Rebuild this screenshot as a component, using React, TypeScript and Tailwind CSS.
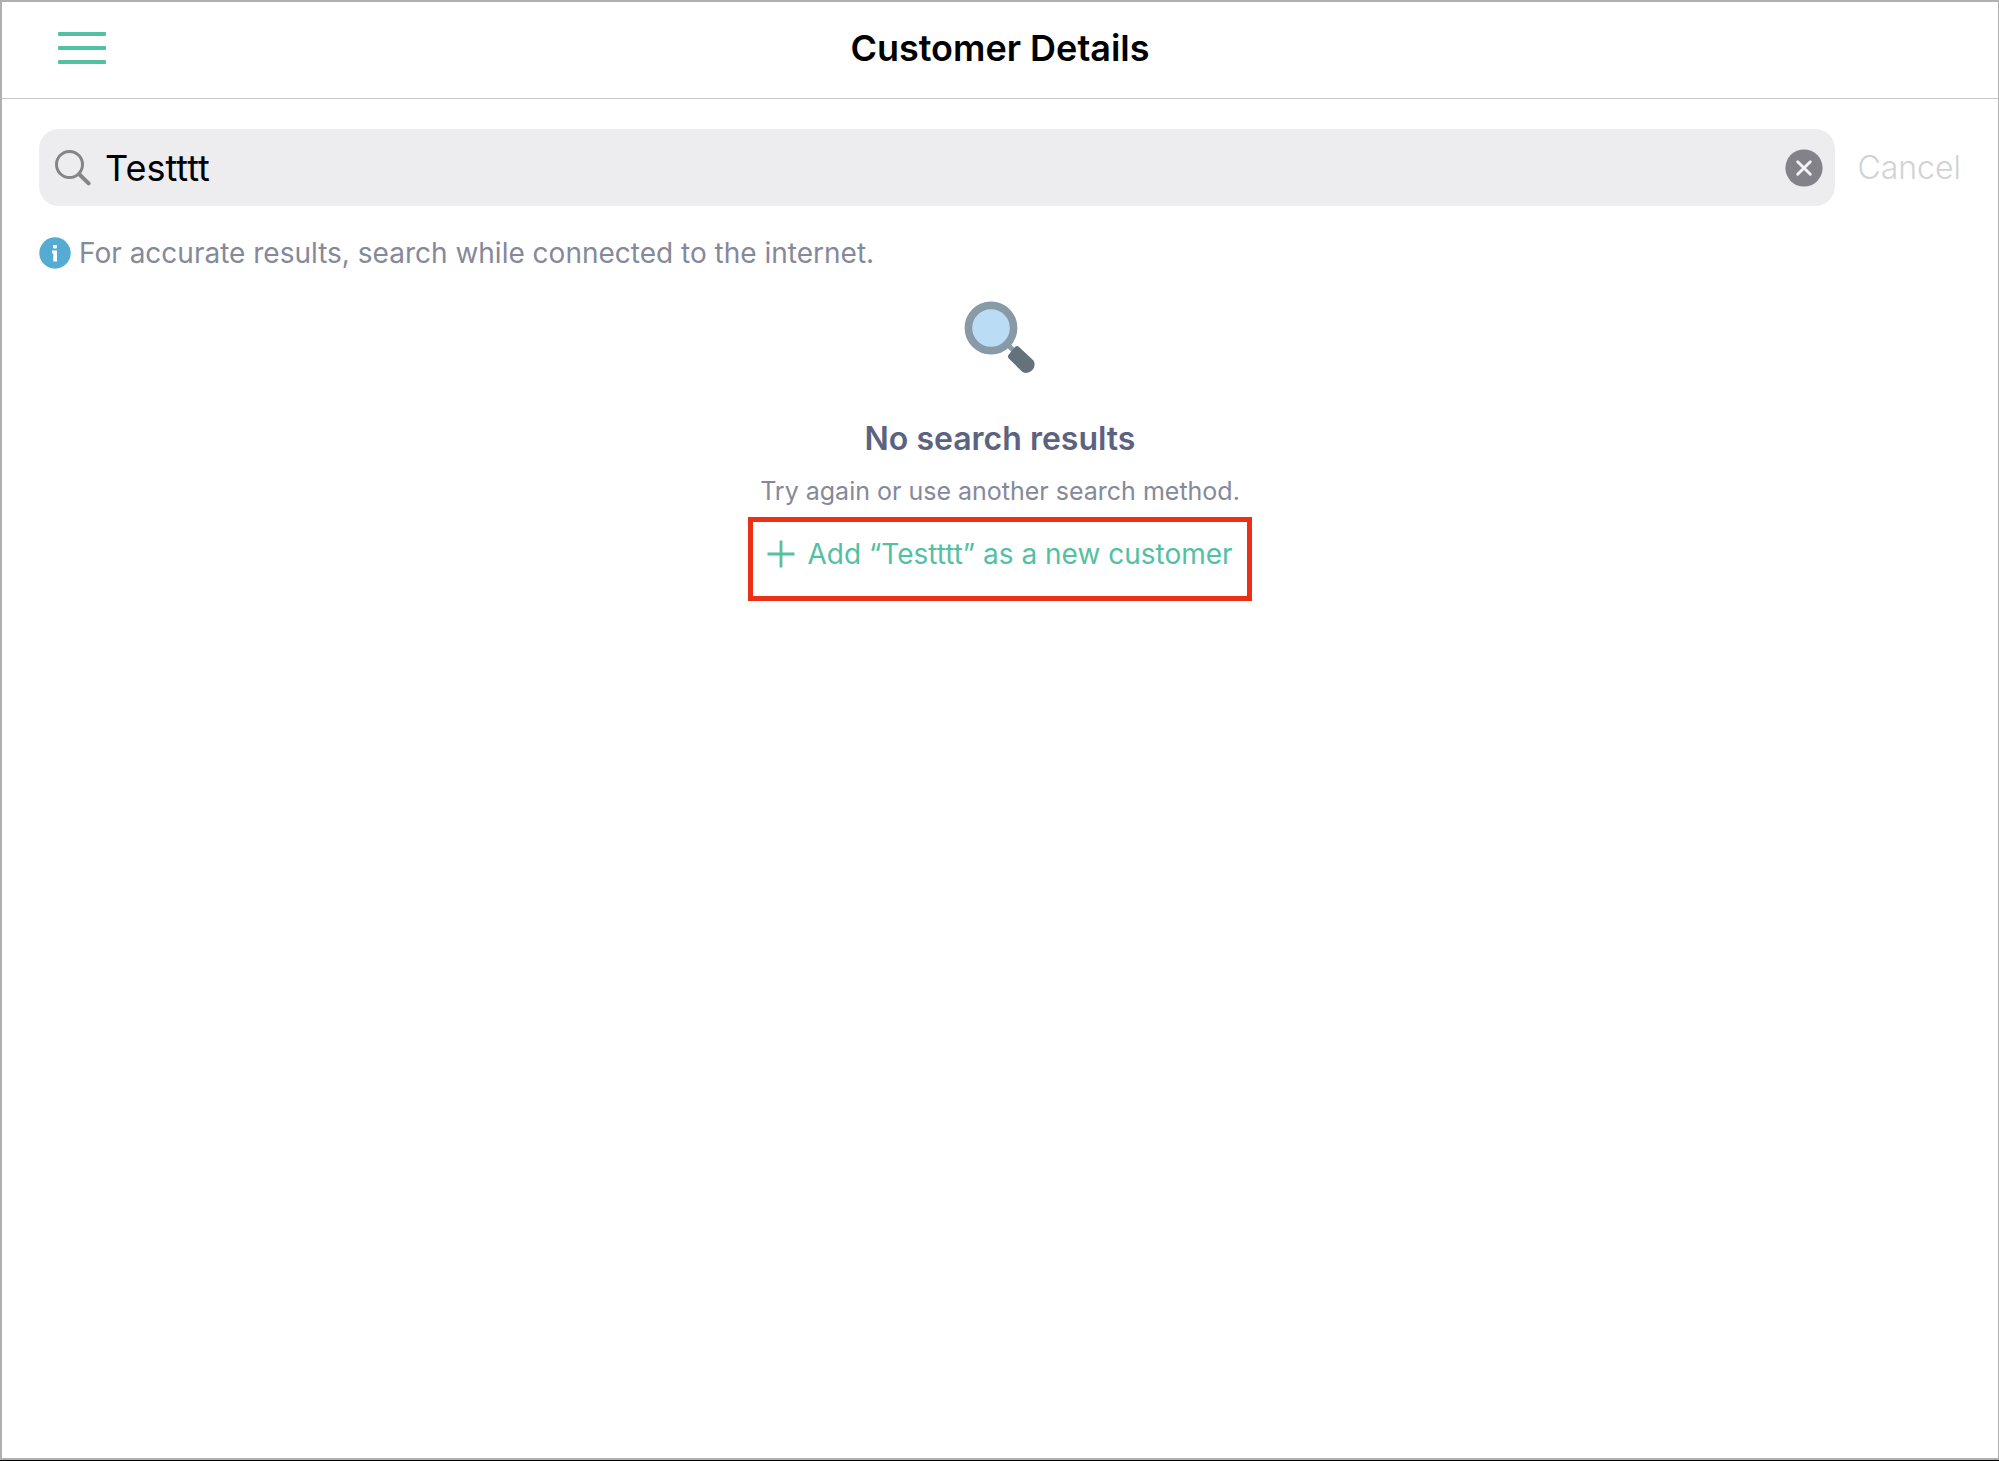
import React, { useState } from "react";

const MenuIcon = () => (
  <svg width="48" height="32" viewBox="0 0 48 32" fill="#54c0a2" aria-hidden="true">
    <rect x="0" y="0" width="48" height="4" rx="1" />
    <rect x="0" y="14" width="48" height="4" rx="1" />
    <rect x="0" y="28" width="48" height="4" rx="1" />
  </svg>
);

const SearchIcon = () => (
  <svg
    width="36"
    height="36"
    viewBox="0 0 36 36"
    fill="none"
    stroke="#858588"
    aria-hidden="true"
    className="shrink-0"
  >
    <circle cx="14.5" cy="14.5" r="13" strokeWidth="3" />
    <path d="M24.2 24.2L33.6 33.4" strokeWidth="4" strokeLinecap="round" />
  </svg>
);

const ClearIcon = () => (
  <svg width="38" height="38" viewBox="0 0 38 38" aria-hidden="true">
    <circle cx="19" cy="19" r="18.6" fill="#838288" />
    <path
      d="M12.7 12.7L25.3 25.3M25.3 12.7L12.7 25.3"
      stroke="#f3f3f5"
      strokeWidth="2.9"
      strokeLinecap="round"
    />
  </svg>
);

const InfoIcon = () => (
  <svg width="32" height="32" viewBox="0 0 32 32" aria-hidden="true" className="shrink-0">
    <circle cx="16" cy="16" r="15.7" fill="#55acd2" />
    <rect x="14" y="8" width="4" height="3.4" rx="0.8" fill="#fff" />
    <path d="M13 13.6h5v11h-3.7v-8.4H13z" fill="#fff" />
  </svg>
);

const MagnifierIcon = () => (
  <svg width="72" height="72" viewBox="0 0 72 72" aria-hidden="true">
    <path d="M42 42L52 52" stroke="#8a9ba8" strokeWidth="5" />
    <circle cx="27" cy="27" r="22.6" fill="#bbdcf5" stroke="#889aa6" strokeWidth="7.6" />
    <path
      d="M54.5 45.5L69.5 59.5A8.4 8.4 0 0 1 58.5 71L44.8 57.6Q43 55.5 44.8 53.4L51 46Q52.8 44.2 54.5 45.5Z"
      fill="#64727c"
    />
  </svg>
);

const PlusIcon = () => (
  <svg
    width="28"
    height="28"
    viewBox="0 0 28 28"
    fill="none"
    stroke="#54c0a2"
    strokeWidth="2.8"
    aria-hidden="true"
    className="shrink-0"
  >
    <path d="M14 0.5v27M0.5 14h27" />
  </svg>
);

const App = () => {
  const [query, setQuery] = useState("Testttt");

  return (
    <div className="border-b border-black bg-white font-['Inter',sans-serif]">
      <div className="flex min-h-[calc(100vh-1px)] flex-col border-2 border-r border-[#b0b0b0]">
        <header className="grid h-[97px] grid-cols-[1fr_auto_1fr] items-center border-b border-[#c8c8c8] px-14 pb-1">
          <button type="button" aria-label="Menu" className="justify-self-start">
            <MenuIcon />
          </button>
          <h1 className="text-[36px] leading-10 font-semibold text-black">Customer Details</h1>
        </header>

        <main className="flex flex-col px-[37px] pt-[30px]">
          <form className="flex items-center gap-[22px]" onSubmit={(e) => e.preventDefault()}>
            <div className="flex h-[77px] flex-1 items-center rounded-[20px] bg-[#ededef] pr-3 pl-4">
              <SearchIcon />
              <input
                type="text"
                aria-label="Search customers"
                value={query}
                onChange={(e) => setQuery(e.target.value)}
                className="ml-3.5 min-w-0 flex-1 bg-transparent text-[36px] leading-10 text-black outline-none"
              />
              <button type="button" aria-label="Clear search" onClick={() => setQuery("")}>
                <ClearIcon />
              </button>
            </div>
            <button type="button" className="text-[32px] leading-10 font-light text-[#d2d2d4]">
              Cancel
            </button>
          </form>

          <p className="mt-[27px] flex items-center gap-2 text-[28px] leading-10 text-[#85899a]">
            <InfoIcon />
            For accurate results, search while connected to the internet.
          </p>

          <section className="mt-7 flex flex-col items-center text-center">
            <MagnifierIcon />
            <h2 className="mt-[46px] text-[32px] leading-10 font-semibold text-[#5c6380]">
              No search results
            </h2>
            <p className="mt-3 text-[25px] leading-10 text-[#85899a]">
              Try again or use another search method.
            </p>
            <div className="mt-1.5 h-[84px] border-[5px] border-[#ea3015] px-3.5 pt-3">
              <button
                type="button"
                className="flex items-center gap-3 text-[28px] leading-10 text-[#54c0a2]"
              >
                <PlusIcon />
                Add “{query}” as a new customer
              </button>
            </div>
          </section>
        </main>
      </div>
    </div>
  );
};

export default App;
